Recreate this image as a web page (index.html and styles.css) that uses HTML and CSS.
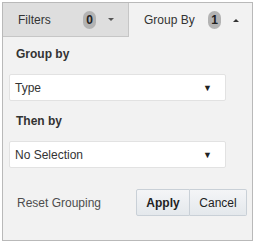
FILE: index.html
```html
<!DOCTYPE html>
<html lang="en">
<head>
  <meta charset="UTF-8">
  <title>Group By</title>
  <link rel="stylesheet" href="styles.css">
</head>
<body>
  <div class="panel">
    <!-- TABS -->
    <div class="tabs">
      <div class="tab">
        <span class="tab-label">Filters</span>
        <span class="badge">0</span>
        <span class="caret down"></span>
      </div>
      <div class="tab active">
        <span class="tab-label">Group By</span>
        <span class="badge">1</span>
        <span class="caret up"></span>
      </div>
    </div>

    <!-- BODY -->
    <div class="content">
      <div class="field-label">Group by</div>
      <div class="select">
        <span>Type</span>
        <span class="arrow">&#9660;</span>
      </div>

      <div class="field-label">Then by</div>
      <div class="select">
        <span>No Selection</span>
        <span class="arrow">&#9660;</span>
      </div>

      <div class="actions">
        <a class="reset">Reset Grouping</a>
        <div class="btn-group">
          <button class="btn primary">Apply</button>
          <button class="btn">Cancel</button>
        </div>
      </div>
    </div>
  </div>
</body>
</html>
```

FILE: styles.css
```css
* {
  margin: 0;
  padding: 0;
  box-sizing: border-box;
}

body {
  font-family: 'Liberation Sans', Arial, sans-serif;
  font-size: 12px;
  color: #333;
  background: #fff;
  padding: 2px 1px 0 2px;
}

.panel {
  width: 251px;
  height: 239px;
  border: 1px solid #b9b9b9;
  background: #f2f2f2;
  display: flex;
  flex-direction: column;
}

/* TABS */
.tabs {
  display: flex;
  height: 34px;
}

.tab {
  flex: 0 0 126px;
  display: flex;
  align-items: center;
  padding: 0 0 0 15px;
  background: #dedede;
  border-right: 1px solid #c6c6c6;
  border-bottom: 1px solid #c6c6c6;
}

.tab.active {
  flex: 1;
  background: #f2f2f2;
  border: none;
  padding-left: 15px;
}

.tab-label {
  width: 65px;
  color: #333;
}

.tab.active .tab-label {
  width: 64px;
}

.badge {
  display: inline-block;
  width: 13px;
  height: 18px;
  line-height: 18px;
  border-radius: 7px;
  background: #b3b3b3;
  color: #222;
  text-align: center;
  font-size: 12px;
  font-weight: bold;
}

.caret {
  margin-left: 12px;
  width: 0;
  height: 0;
  border-left: 3px solid transparent;
  border-right: 3px solid transparent;
}

.caret.down {
  border-top: 3px solid #555;
}

.caret.up {
  border-bottom: 3px solid #333;
}

/* CONTENT */
.content {
  padding: 10px 26px 0 6px;
}

.field-label {
  font-weight: bold;
  color: #333;
  padding-left: 7px;
  margin-bottom: 13px;
}

.select {
  display: flex;
  justify-content: space-between;
  align-items: center;
  height: 27px;
  background: #fff;
  border: 1px solid #e2e2e2;
  border-radius: 2px;
  padding: 0 13px 0 5px;
  margin-bottom: 13px;
  font-size: 12px;
  color: #333;
}

.arrow {
  font-size: 9px;
  color: #222;
}

.actions {
  display: flex;
  align-items: center;
  justify-content: space-between;
  margin-right: -21px;
  margin-top: 21px;
  padding-left: 8px;
}

.reset {
  color: #4d4d4d;
  font-size: 12px;
}

.btn-group {
  display: flex;
}

.btn {
  font-family: 'Liberation Sans', Arial, sans-serif;
  font-size: 12px;
  height: 27px;
  padding: 0 7px;
  background: linear-gradient(#f4f5f7, #e4e8ec);
  border: 1px solid #c9d0d7;
  color: #222;
}

.btn.primary {
  font-weight: bold;
  width: 54px;
  border-radius: 2px 0 0 2px;
}

.btn + .btn {
  border-left: none;
  width: 57px;
  border-radius: 0 2px 2px 0;
}
```
